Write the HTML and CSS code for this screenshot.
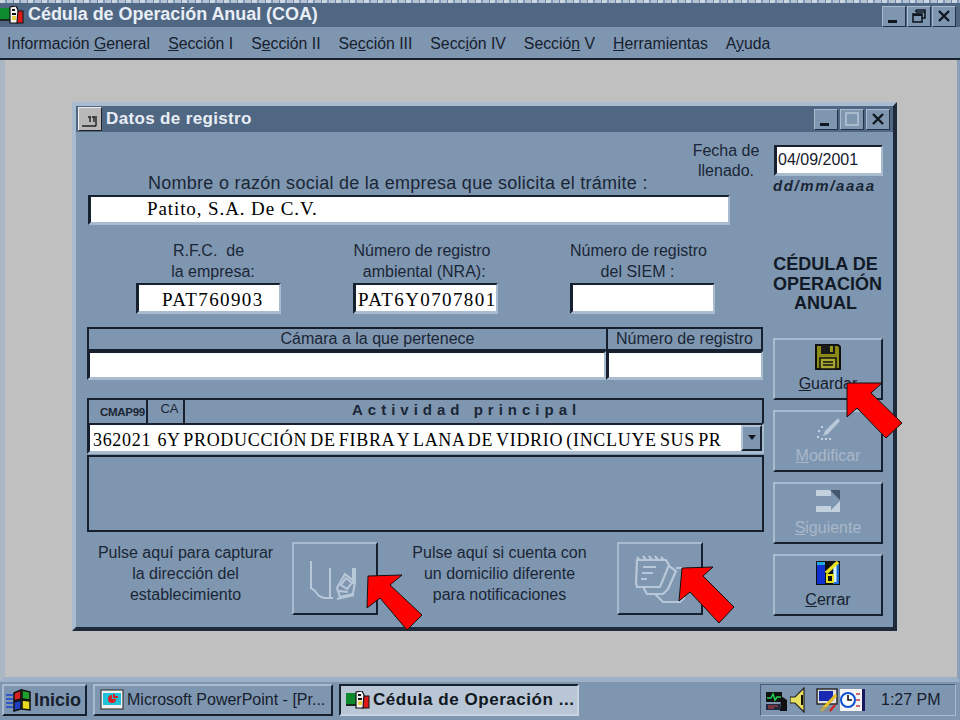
FILE: index.html
```html
<!DOCTYPE html>
<html lang="es">
<head>
<meta charset="utf-8">
<title>Cédula de Operación Anual (COA)</title>
<link rel="stylesheet" href="styles.css">
</head>
<body>
<svg class="defs" width="0" height="0" aria-hidden="true">
  <symbol id="coa" viewBox="0 0 24 18">
    <rect x="0" y="2" width="11" height="11" fill="#0c8a2c"/>
    <rect x="0" y="13" width="12" height="2" fill="#1a2a20"/>
    <rect x="16" y="5" width="7" height="12" fill="#e01818" stroke="#111" stroke-width="1"/>
    <path d="M10 1 L16 0 L18 4 L17 17 L10 17 Z" fill="#f4f4f4" stroke="#111" stroke-width="1.2"/>
    <path d="M12 4h3M12 8h4" stroke="#111" stroke-width="2"/>
    <rect x="12" y="10" width="4" height="4" fill="#e8d040"/>
  </symbol>
  <symbol id="close" viewBox="0 0 22 18">
    <path d="M6 4 L16 14 M16 4 L6 14" stroke="#101820" stroke-width="2.4"/>
  </symbol>
  <symbol id="min" viewBox="0 0 22 18">
    <rect x="5" y="13" width="9" height="3" fill="#101820"/>
  </symbol>
</svg>

<div class="topstrip"></div>
<header class="titlebar">
  <svg class="title-icon"><use href="#coa"/></svg>
  <span class="title-text">Cédula de Operación Anual (COA)</span>
  <div class="controls">
    <span class="ctl"><svg width="22" height="18"><use href="#min"/></svg></span>
    <span class="ctl"><svg width="22" height="18" viewBox="0 0 22 18"><path d="M8 3h9v8h-3M8 3v2M8 5h9" fill="none" stroke="#101820" stroke-width="1.6"/><rect x="5" y="7" width="9" height="8" fill="none" stroke="#101820" stroke-width="1.6"/><path d="M5 8h9" stroke="#101820" stroke-width="2"/></svg></span>
    <span class="ctl"><svg width="22" height="18"><use href="#close"/></svg></span>
  </div>
</header>
<nav class="menubar">
  <span>Información <u>G</u>eneral</span>
  <span><u>S</u>ección I</span>
  <span>S<u>e</u>cción II</span>
  <span>Se<u>c</u>ción III</span>
  <span>Secc<u>i</u>ón IV</span>
  <span>Secció<u>n</u> V</span>
  <span><u>H</u>erramientas</span>
  <span>A<u>y</u>uda</span>
</nav>

<main class="client">
  <section class="dialog">
    <div class="dlg-title">
      <span class="sysbtn"><svg width="22" height="22" viewBox="0 0 22 22"><path d="M3 18h6M9 18 L17 18 M11 9v5M15 9v5M9 9h3M13 9h3M17 8v10" fill="none" stroke="#222" stroke-width="1.4"/></svg></span>
      <span class="dlg-title-text">Datos de registro</span>
      <div class="dlg-controls">
        <span class="ctl"><svg width="22" height="18"><use href="#min"/></svg></span>
        <span class="ctl"><svg width="22" height="18" viewBox="0 0 22 18"><rect x="5" y="3" width="12" height="12" fill="none" stroke="#a9bacd" stroke-width="2"/></svg></span>
        <span class="ctl"><svg width="22" height="18"><use href="#close"/></svg></span>
      </div>
    </div>
    <div class="dlg-body">
      <div class="left">
        <div class="top-row">
          <label class="lbl-name">Nombre o razón social de la empresa que solicita el trámite :</label>
          <div class="lbl-date">Fecha de<br>llenado.</div>
        </div>
        <div class="input input-name serif">Patito, S.A. De C.V.</div>

        <div class="ids">
          <div class="id-col first">
            <div class="id-label">R.F.C.&nbsp; de<br>&nbsp;&nbsp;la empresa:</div>
            <div class="input input-id serif pad-rfc">PAT760903</div>
          </div>
          <div class="id-col">
            <div class="id-label">Número de registro<br>&nbsp;ambiental (NRA):</div>
            <div class="input input-id serif">PAT6Y0707801</div>
          </div>
          <div class="id-col third">
            <div class="id-label">Número de registro<br>del SIEM :</div>
            <div class="input input-id"></div>
          </div>
        </div>

        <div class="chamber">
          <div class="th th-l">Cámara a la que pertenece</div>
          <div class="th th-r">Número de registro</div>
          <div class="input cell"></div>
          <div class="input cell"></div>
        </div>

        <div class="activity">
          <div class="act-head">
            <div class="ah-cmap">CMAP99</div>
            <div class="ah-ca">CA</div>
            <div class="ah-main">Actividad principal</div>
          </div>
          <div class="combo">
            <div class="combo-text serif">362021&nbsp; 6Y PRODUCCIÓN DE FIBRA Y LANA DE VIDRIO (INCLUYE SUS PR</div>
            <span class="combo-btn"><svg width="10" height="6" viewBox="0 0 10 6"><path d="M1 0h8L5 5z" fill="#101820"/></svg></span>
          </div>
          <div class="act-box"></div>
        </div>

        <div class="bottom">
          <p class="hint hint-a">Pulse aquí para capturar<br>la dirección del<br>establecimiento</p>
          <button class="btn big" type="button">
            <svg width="54" height="50" viewBox="0 0 54 50"><g fill="none" stroke="#b9c8d9" stroke-width="2"><path d="M3 7v27l4 3 4 5 5 2h9"/><path d="M22 14v30"/><path d="M29 34l8-14 10 8-2 12-13 3z"/><path d="M33 31l5-7 6 5-5 6zM31 37l9 1M29 45l17-4"/></g><path d="M46 14v16" stroke="#b9c8d9" stroke-width="4"/></svg>
          </button>
          <p class="hint hint-b">Pulse aquí si cuenta con<br>un domicilio diferente<br>para notificaciones</p>
          <button class="btn big" type="button">
            <svg width="54" height="50" viewBox="0 0 54 50"><g fill="none" stroke="#b9c8d9" stroke-width="2.2"><path d="M4 6h29l3 5-9 22H4l-1-4z"/><path d="M4 3l3 3M10 2l3 4M16 2l3 4M22 2l3 4M28 3l3 3"/><path d="M10 13h13M9 19h11M8 25h6"/><path d="M36 12l7 5-8 18-5 5H14l-4-7"/><path d="M43 14h8v30l-4 4H30l-8-8"/></g></svg>
          </button>
        </div>
      </div>

      <aside class="right">
        <div class="input input-date">04/09/2001</div>
        <div class="date-fmt">dd/mm/aaaa</div>
        <h1 class="doc-title">CÉDULA DE<br>OPERACIÓN<br>ANUAL</h1>
        <div class="actions">
          <button class="btn side" type="button">
            <svg width="26" height="26" viewBox="0 0 26 26"><path d="M1 1h22l2 2v22H1z" fill="#8a8a14" stroke="#101010" stroke-width="2"/><rect x="6" y="1" width="14" height="9" fill="#1a1a1a"/><rect x="15" y="2" width="3" height="6" fill="#9a9a20"/><rect x="5" y="14" width="16" height="11" fill="#a8a830" stroke="#101010" stroke-width="1.5"/><path d="M8 18h10M8 21h10" stroke="#101010" stroke-width="1.5"/></svg>
            <span><u>G</u>uardar</span>
          </button>
          <button class="btn side off" type="button">
            <svg width="26" height="26" viewBox="0 0 26 26"><path d="M23 2 L10 15 L8 20 L13 18 L25 5 Z" fill="#b9c8d9"/><path d="M3 15h2M6 11h2M2 21h2M6 23h2M10 23h2M14 23h2" stroke="#c6d2e0" stroke-width="2"/></svg>
            <span><u>M</u>odificar</span>
          </button>
          <button class="btn side off" type="button">
            <svg width="26" height="26" viewBox="0 0 26 26"><path d="M1 2h15v6H1zM1 18h15v6H1z" fill="#c3d0de"/><path d="M15 2h10v10L15 2z" fill="#44566c"/><path d="M14 24l11-11v11z" fill="#c3d0de"/></svg>
            <span><u>S</u>iguiente</span>
          </button>
          <button class="btn side" type="button">
            <svg width="26" height="26" viewBox="0 0 26 26"><rect x="1" y="1" width="24" height="24" fill="#101010"/><rect x="2" y="5" width="8" height="19" fill="#1030d0"/><rect x="2" y="2" width="8" height="3" fill="#20a8e0"/><rect x="18" y="3" width="6" height="21" fill="#1c6cd8"/><path d="M20 6v16" stroke="#d8f0f8" stroke-width="3"/><path d="M11 13l12-11" stroke="#e8e020" stroke-width="3.4"/><path d="M12 15h6v7h-6z" fill="none" stroke="#e8e020" stroke-width="2"/></svg>
            <span><u>C</u>errar</span>
          </button>
        </div>
      </aside>
    </div>
  </section>
</main>

<footer class="taskbar">
  <button class="task start" type="button">
    <svg class="flag" width="28" height="24" viewBox="0 0 26 24"><path d="M0 7h7M0 11h7M0 15h7M0 19h7" stroke="#3058c8" stroke-width="2"/><path d="M8 5l7-3v9l-7 2z" fill="#d82020" stroke="#111" stroke-width="1.5"/><path d="M16 2l8 2v8l-8-1z" fill="#20a030" stroke="#111" stroke-width="1.5"/><path d="M8 14l7-2v9l-7 2z" fill="#2040c8" stroke="#111" stroke-width="1.5"/><path d="M16 12l8 1v9l-8-1z" fill="#e8d820" stroke="#111" stroke-width="1.5"/></svg>
    <span>Inicio</span>
  </button>
  <button class="task app" type="button">
    <svg class="pp-icon" width="24" height="22" viewBox="0 0 24 22"><rect x="1" y="1" width="22" height="19" fill="#f0f0f0" stroke="#222" stroke-width="1"/><rect x="3" y="4" width="18" height="12" fill="#20c0d8"/><path d="M12 6a4 4 0 1 0 4 4h-4z" fill="#d82020"/><path d="M14 5v3h4" fill="none" stroke="#d82020" stroke-width="2"/></svg>
    <span class="app-text">Microsoft PowerPoint - [Pr...</span>
  </button>
  <button class="task app active" type="button">
    <svg class="task-icon"><use href="#coa"/></svg>
    <span class="active-text">Cédula de Operación ...</span>
  </button>
  <div class="tray">
    <svg width="22" height="24" viewBox="0 0 22 24"><rect x="0" y="4" width="16" height="10" fill="#101010"/><path d="M1 10h4l2-4 2 6 2-3h4" fill="none" stroke="#20d050" stroke-width="1.5"/><path d="M0 16h14v6H0z" fill="#202840"/><path d="M2 18h10M2 20h6" stroke="#d04040" stroke-width="1.2"/><path d="M15 8l6 4v11h-7z" fill="#101010"/></svg>
    <svg width="16" height="26" viewBox="0 0 16 26"><path d="M0 10h5l9-9v24l-9-9H0z" fill="#e8e060" stroke="#222" stroke-width="1.2"/><path d="M12 8v10" stroke="#111" stroke-width="2"/></svg>
    <svg class="tray-gap" width="22" height="26" viewBox="0 0 22 26"><rect x="1" y="2" width="20" height="15" fill="#e0e0e0" stroke="#222" stroke-width="1.4"/><rect x="3" y="4" width="14" height="10" fill="#1828b0"/><path d="M5 24L20 8" stroke="#e8c020" stroke-width="3"/><path d="M4 20h12v5H4z" fill="#888" opacity=".5"/><path d="M14 24l5-6" stroke="#d02020" stroke-width="2"/></svg>
    <svg width="26" height="24" viewBox="0 0 26 24"><rect x="0" y="1" width="24" height="22" fill="#f4f4f4"/><path d="M22 1h3v22h-3z" fill="#181860"/><circle cx="8" cy="12" r="7" fill="#fff" stroke="#1050d0" stroke-width="2"/><path d="M8 7v5h4" fill="none" stroke="#111" stroke-width="1.6"/><path d="M16 6h4M16 12h4M16 18h4" stroke="#c04040" stroke-width="1.4"/></svg>
    <span class="clock">1:27 PM</span>
  </div>
</footer>

<svg class="arrows" width="960" height="720" viewBox="0 0 960 720" aria-hidden="true">
  <polygon points="847,383 882,383 871,393 902,423 886,438 857,408 847,417"/>
  <polygon points="368,576 402,575 390,585 422,615 407,630 380,598 367,608"/>
  <polygon points="682,568 713,567 703,576 734,607 719,623 690,592 679,601"/>
</svg>
</body>
</html>
```

FILE: styles.css
```css
* { box-sizing: border-box; }
html, body { margin: 0; padding: 0; }
body {
  position: relative;
  width: 960px;
  height: 720px;
  overflow: hidden;
  display: flex;
  flex-direction: column;
  background: #7f96b0;
  font-family: "Liberation Sans", Arial, sans-serif;
  font-size: 16px;
  color: #1a2636;
}
.defs { position: absolute; }
.serif { font-family: "Liberation Serif", "Times New Roman", serif; color: #000; }

.topstrip {
  height: 3px;
  background: repeating-linear-gradient(90deg, #ccd6e2 0 5px, #8098b8 5px 7px, #b4c2d4 7px 13px, #7088aa 13px 14px);
}
.titlebar {
  height: 24px;
  background: #506783;
  display: flex;
  align-items: center;
}
.title-icon { width: 24px; height: 18px; margin: 0 4px 0 0; flex: none; }
.title-text {
  color: #e8eef5;
  font-weight: 700;
  font-size: 18px;
  line-height: 22px;
  letter-spacing: -.05px;
  white-space: nowrap;
  padding-bottom: 2px;
}
.controls { margin-left: auto; display: flex; gap: 1px; margin-right: 4px; margin-top: 2px; }
.dlg-controls { margin-left: auto; display: flex; gap: 2px; margin-right: 3px; }
.ctl {
  width: 24px;
  height: 21px;
  display: flex;
  align-items: center;
  justify-content: center;
  background: #7f96b0;
  border: 1px solid;
  border-color: #a9bbcf #243246 #243246 #a9bbcf;
}
.menubar {
  height: 33px;
  padding: 2px 0 0 7px;
  display: flex;
  align-items: center;
  gap: 18px;
  background: #7f96b0;
  border-bottom: 2px solid #16202e;
  white-space: nowrap;
  color: #16202e;
  font-size: 15.8px;
}

.client {
  flex: 1;
  min-height: 0;
  background: #c0c0c0;
  padding: 42px 0 0 67px;
  border-left: 5px solid #aab6c4;
  border-right: 3px solid #8ba0b8;
  border-bottom: 5px solid #9db0c6;
}
.dialog {
  width: 825px;
  height: 529px;
  background: #7f96b0;
  border-style: solid;
  border-width: 4px;
  border-color: #a9bbcf #1e2a3a #1e2a3a #a9bbcf;
  display: flex;
  flex-direction: column;
}
.dlg-title {
  height: 26px;
  background: #506783;
  display: flex;
  align-items: center;
  flex: none;
}
.sysbtn {
  width: 24px;
  height: 24px;
  margin: 0 4px 0 2px;
  background: #b8b8b8;
  border: 1px solid;
  border-color: #eee #222 #222 #eee;
  display: flex;
}
.dlg-title-text {
  color: #e8eef5;
  font-weight: 700;
  font-size: 17px;
  letter-spacing: .35px;
}
.dlg-body {
  flex: 1;
  display: flex;
  gap: 9px;
  padding-left: 11px;
}
.left { width: 677px; flex: none; }
.right { width: 110px; flex: none; padding-top: 13px; }

.input {
  background: #fff;
  border-style: solid;
  border-width: 2px 2px 3px 3px;
  border-color: #16202e #a9bbcf #a9bbcf #16202e;
}
.top-row {
  height: 63px;
  padding: 9px 0 0 61px;
  display: flex;
  justify-content: space-between;
  align-items: flex-end;
}
.lbl-name { font-size: 18px; letter-spacing: .27px; white-space: nowrap; line-height: 20px; padding-bottom: 2px; }
.lbl-date { width: 76px; line-height: 20px; text-align: center; align-self: flex-start; flex: none; margin-left: -76px; }
.input-name {
  width: 642px;
  height: 30px;
  margin-left: 1px;
  padding-left: 56px;
  font-size: 19px;
  letter-spacing: .9px;
  line-height: 24px;
}
.ids {
  display: grid;
  grid-template-columns: repeat(3, 145px);
  column-gap: 72px;
  padding-left: 49px;
  margin-top: 15px;
}
.id-label { height: 43px; line-height: 21px; text-align: center; padding-right: 7px; white-space: nowrap; }
.first .id-label { padding-right: 0; }
.third .id-label { padding-right: 10px; }
.input-id { height: 31px; font-size: 19px; letter-spacing: 1.4px; line-height: 29px; padding-left: 2px; }
.pad-rfc { padding-left: 23px; }
.chamber {
  display: grid;
  grid-template-columns: 519px 157px;
  margin-top: 13px;
}
.th {
  height: 24px;
  border: solid #16202e;
  border-width: 2px 0 2px 2px;
  text-align: center;
  line-height: 20px;
}
.th-l { padding-left: 60px; }
.th-r { border-right-width: 2px; }
.cell { height: 29px; }

.activity { margin-top: 18px; }
.act-head {
  display: flex;
  height: 25px;
  border: solid #16202e;
  border-width: 2px 2px 0 2px;
  align-items: stretch;
}
.ah-cmap { width: 59px; border-right: 2px solid #16202e; font-size: 11.5px; font-weight: 700; text-align: center; line-height: 24px; padding-left: 10px; letter-spacing: -.3px; white-space: nowrap; }
.ah-ca { width: 37px; border-right: 2px solid #16202e; font-size: 13px; text-align: center; line-height: 17px; padding-left: 8px; }
.ah-main { flex: 1; padding-left: 167px; font-size: 15px; font-weight: 700; letter-spacing: 5px; line-height: 20px; white-space: nowrap; }
.combo {
  height: 31px;
  display: flex;
  background: #fff;
  border-style: solid;
  border-width: 2px 2px 3px 3px;
  border-color: #16202e #a9bbcf #a9bbcf #16202e;
}
.combo-text {
  flex: 1;
  padding-left: 3px;
  font-size: 18px;
  letter-spacing: .68px;
  word-spacing: -2px;
  line-height: 31px;
  white-space: nowrap;
  overflow: hidden;
}
.combo-btn {
  width: 21px;
  flex: none;
  background: #7f96b0;
  border: 2px solid;
  border-color: #b4c4d6 #16202e #16202e #b4c4d6;
  display: flex;
  align-items: center;
  justify-content: center;
}
.act-box {
  height: 77px;
  margin-top: 1px;
  border: solid #16202e;
  border-width: 2px;
}
.bottom {
  display: grid;
  grid-template-columns: 205px 86px 239px 86px;
  margin-top: 10px;
}
.hint { margin: 0; line-height: 21px; text-align: center; white-space: nowrap; }
.hint-a { padding-right: 8px; }
.hint-b { padding-left: 4px; }

.btn {
  background: #7f96b0;
  border: 2px solid;
  border-color: #a9bbcf #16202e #16202e #a9bbcf;
  padding: 0;
  font: inherit;
  color: #16202e;
  display: flex;
  flex-direction: column;
  align-items: center;
}
.big { height: 73px; justify-content: center; }
.input-date { width: 109px; margin-left: 1px; height: 31px; font-size: 16px; line-height: 25px; padding-left: 1px; color: #16202e; }
.date-fmt { margin-top: 1px; font-size: 15px; font-weight: 700; font-style: italic; letter-spacing: 1.6px; line-height: 18px; white-space: nowrap; }
.doc-title {
  margin: 60px 0 24px;
  padding-right: 5px;
  font-size: 18px;
  font-weight: 700;
  line-height: 19.7px;
  text-align: center;
  color: #111a26;
  white-space: nowrap;
}
.actions { display: flex; flex-direction: column; gap: 10px; }
.side { height: 62px; padding-top: 4px; gap: 5px; }
.off { color: #a8b8ca; }

.taskbar {
  height: 38px;
  flex: none;
  display: flex;
  align-items: center;
  padding: 0 4px 2px 2px;
  background: #7f96b0;
  gap: 6px;
}
.task {
  height: 32px;
  background: #7f96b0;
  border: 2px solid;
  border-color: #a9bbcf #16202e #16202e #a9bbcf;
  padding: 0;
  font: inherit;
  color: #16202e;
  display: flex;
  align-items: center;
  white-space: nowrap;
}
.start { width: 85px; padding-left: 1px; font-weight: 700; font-size: 18px; }
.flag { flex: none; margin-right: 1px; }
.app { width: 240px; padding-left: 5px; gap: 3px; }
.pp-icon { flex: none; }
.app-text { font-size: 16px; }
.active { background: #b9c6d6; border-color: #16202e #c9d4e1 #c9d4e1 #16202e; }
.task-icon { width: 24px; height: 18px; flex: none; }
.active-text { font-weight: 700; font-size: 17px; letter-spacing: .55px; color: #101820; }
.tray {
  margin-left: auto;
  width: 196px;
  height: 32px;
  display: flex;
  align-items: center;
  padding-left: 5px;
  gap: 2px;
  border: 1px solid;
  border-color: #4a5e78 #a9bbcf #a9bbcf #4a5e78;
}
.tray-gap { margin-left: 8px; }
.clock { margin-left: 13px; font-size: 16px; color: #16202e; white-space: nowrap; }

.arrows { position: absolute; left: 0; top: 0; pointer-events: none; }
.arrows polygon { fill: #ff0000; stroke: #111; stroke-width: 1; stroke-linejoin: miter; }
```
